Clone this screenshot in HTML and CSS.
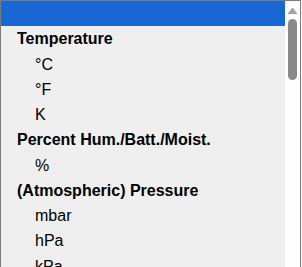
FILE: index.html
```html
<!DOCTYPE html>
<html>
<head>
<meta charset="utf-8">
<link rel="stylesheet" href="styles.css">
</head>
<body>
<div class="listbox">
  <div class="options">
    <div class="row selected"></div>
    <div class="row group">Temperature</div>
    <div class="row opt">°C</div>
    <div class="row opt">°F</div>
    <div class="row opt">K</div>
    <div class="row group">Percent Hum./Batt./Moist.</div>
    <div class="row opt">%</div>
    <div class="row group">(Atmospheric) Pressure</div>
    <div class="row opt">mbar</div>
    <div class="row opt">hPa</div>
    <div class="row opt">kPa</div>
  </div>
  <div class="scrollbar">
    <svg class="arrow" width="15" height="17" viewBox="0 0 15 17">
      <polygon points="2.5,13 12.5,13 8,7 7,7" fill="#a3a3a3"/>
    </svg>
    <div class="thumb"></div>
  </div>
</div>
</body>
</html>
```
FILE: styles.css
```css
html, body {
  margin: 0;
  padding: 0;
  background: #ffffff;
}
body {
  font-family: "Liberation Sans", Arial, sans-serif;
  font-size: 16px;
  color: #000;
  overflow: hidden;
}
.listbox {
  box-sizing: border-box;
  width: 301px;
  height: 267px;
  overflow: hidden;
  border: 1px solid #7a7a7a;
  border-bottom: none;
  display: flex;
}
.options {
  width: 284px;
  background: #efefef;
}
.row {
  height: 25.25px;
  line-height: 25.25px;
  white-space: nowrap;
}
.selected {
  background: #1967d2;
}
.group {
  font-weight: bold;
  padding-left: 16px;
}
.opt {
  padding-left: 34px;
}
.scrollbar {
  width: 15px;
  background: #fdfdfd;
  display: flex;
  flex-direction: column;
}
.arrow {
  display: block;
}
.thumb {
  margin-top: 1px;
  margin-left: 3px;
  width: 9px;
  height: 61px;
  border-radius: 4.5px;
  background: #8a8a8a;
}
```
